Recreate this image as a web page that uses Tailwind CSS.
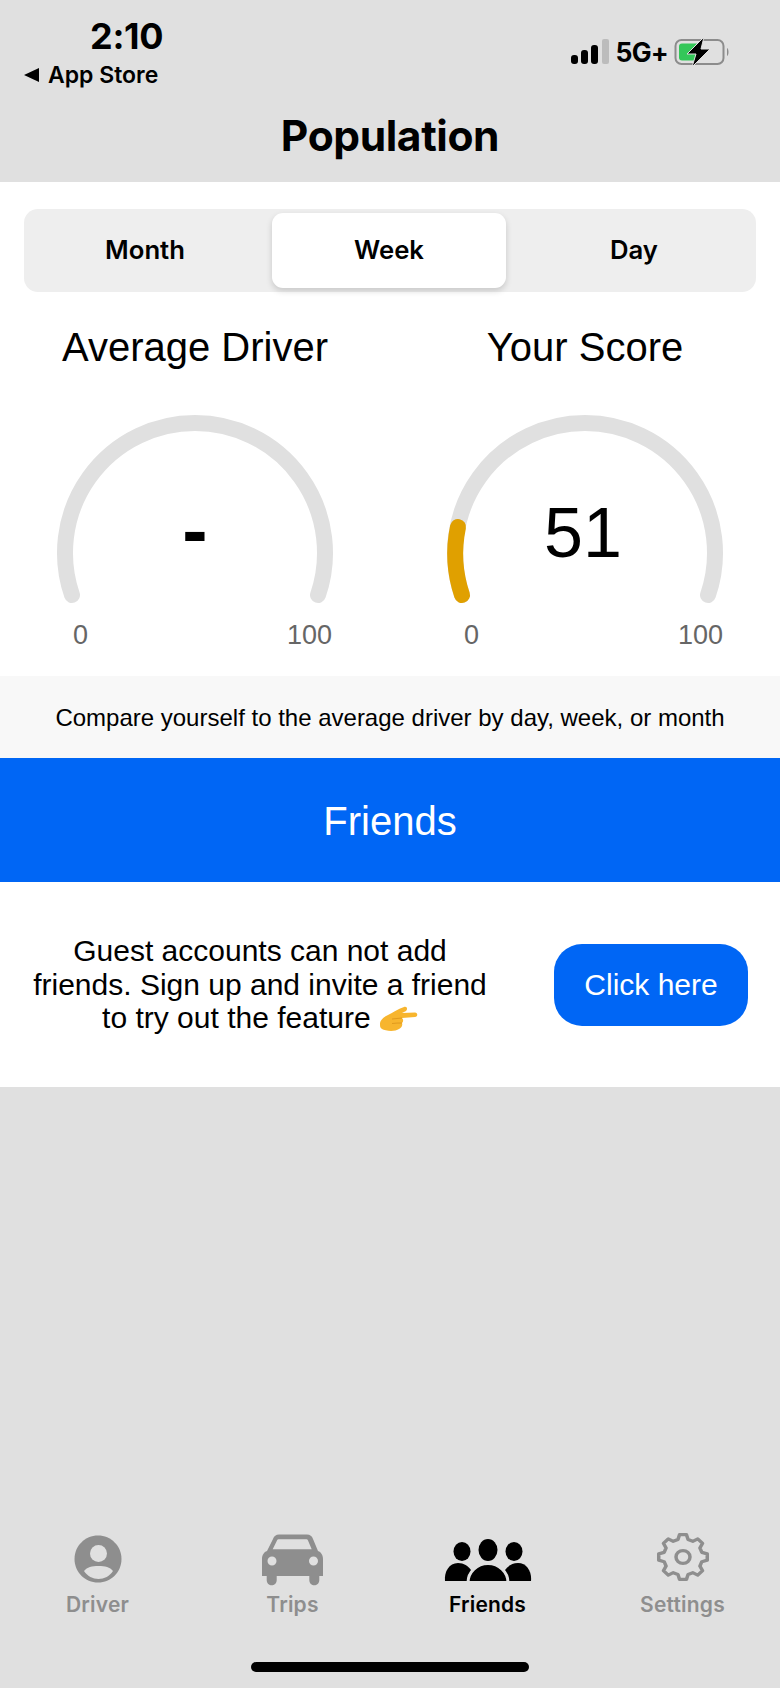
<!DOCTYPE html>
<html lang="en">

<head>
  <meta charset="UTF-8">
  <meta name="viewport" content="width=device-width, initial-scale=1.0">
  <title>Population</title>
  <script src="https://cdn.jsdelivr.net/npm/@tailwindcss/browser@4"></script>
</head>

<body class="w-[780px] h-[1688px] overflow-hidden bg-[#e0e0e0] text-black font-['Liberation_Sans',Arial,sans-serif]">

  <!-- Header -->
  <header class="h-[182px] bg-[#e0e0e0] font-['Inter',sans-serif]">
    <div class="flex justify-between h-[112px]">
      <div class="pl-[24px]">
        <p class="ml-[66px] pt-[16px] text-[36px] leading-[40px] font-bold tracking-[-0.3px]">2:10</p>
        <p class="flex items-center mt-[6px] text-[23px] leading-[26px] font-semibold">
          <svg class="w-[16px] h-[14px] mr-[8px]" viewBox="0 0 16 14"><path d="M15 0V14L0 7Z" fill="#000" /></svg>
          App Store
        </p>
      </div>
      <div class="flex items-start pt-[38px] pr-[50px]">
        <svg class="w-[40px] h-[26px] -ml-[2px]" viewBox="0 0 40 26">
          <rect x="1" y="17" width="7" height="9" rx="3" fill="#000" />
          <rect x="11" y="12" width="7" height="14" rx="3" fill="#000" />
          <rect x="21" y="7" width="7" height="19" rx="3" fill="#000" />
          <rect x="32" y="1" width="7" height="25" rx="2" fill="#bcbcbc" />
        </svg>
        <span class="ml-[6px] text-[26.500px] leading-[28px] font-bold tracking-[-0.8px]">5G+</span>
        <svg class="w-[56px] h-[30px] ml-[6px] -mt-[1px]" viewBox="0 0 56 30">
          <rect x="1.500" y="3" width="48" height="24" rx="6" fill="none" stroke="#8c8c8c" stroke-width="2" />
          <rect x="5" y="6.500" width="20" height="17" rx="3" fill="#34c759" />
          <path d="M53 11C55 12 55 18 53 19Z" fill="#8c8c8c" />
          <path d="M30 0L13 17H22L18 30L36 12H27Z" fill="#000" stroke="#e0e0e0" stroke-width="1" />
        </svg>
      </div>
    </div>
    <h1 class="text-center text-[42.500px] leading-[48px] font-bold tracking-[-0.4px]">Population</h1>
  </header>

  <main class="bg-white">
    <!-- Range switcher -->
    <div class="pt-[27px] px-[24px]">
      <div class="grid grid-cols-[248px_234px_250px] items-center h-[83px] bg-[#eeeeee] rounded-[14px] font-['Inter',sans-serif] text-[25.700px] font-semibold">
        <span class="text-center pr-[6px]">Month</span>
        <span class="flex items-center justify-center h-[75px] bg-white rounded-[11px] shadow-[0_3px_6px_rgba(0,0,0,0.16)]">Week</span>
        <span class="text-center pl-[6px]">Day</span>
      </div>
    </div>

    <!-- Gauges -->
    <div class="grid grid-cols-2 h-[384px]">
      <section>
        <h2 class="pt-[33px] text-center text-[40px] leading-[44px]">Average Driver</h2>
        <div class="relative w-[300px] h-[200px] mx-auto mt-[38px]">
          <svg class="w-[300px] h-[200px]" viewBox="0 0 300 200">
            <path d="M27 188A130 130 0 1 1 273 188" fill="none" stroke="#e0e0e0" stroke-width="16" stroke-linecap="round" />
          </svg>
          <span class="absolute left-0 right-0 top-[83px] text-center text-[76px] leading-[80px] font-bold">-</span>
        </div>
        <div class="flex justify-between pl-[73px] pr-[58px] mt-[13px] text-[27px] leading-[30px] text-[#666666]">
          <span>0</span><span>100</span>
        </div>
      </section>
      <section>
        <h2 class="pt-[33px] text-center text-[40px] leading-[44px]">Your Score</h2>
        <div class="relative w-[300px] h-[200px] mx-auto mt-[38px]">
          <svg class="w-[300px] h-[200px]" viewBox="0 0 300 200">
            <path d="M27 188A130 130 0 1 1 273 188" fill="none" stroke="#e0e0e0" stroke-width="16" stroke-linecap="round" />
            <path d="M27 188A130 130 0 0 1 23 120" fill="none" stroke="#e0a000" stroke-width="16" stroke-linecap="round" />
          </svg>
          <span class="absolute left-0 right-[4px] top-[86px] text-center text-[70px] leading-[80px]">51</span>
        </div>
        <div class="flex justify-between pl-[74px] pr-[57px] mt-[13px] text-[27px] leading-[30px] text-[#666666]">
          <span>0</span><span>100</span>
        </div>
      </section>
    </div>

    <p class="flex items-center justify-center h-[82px] pt-[1px] bg-[#f8f8f8] text-[24px]">Compare yourself to the average driver by day, week, or month</p>

    <h2 class="flex items-center justify-center h-[124px] pt-[1px] bg-[#0066f5] text-white text-[40px]">Friends</h2>

    <!-- Guest notice -->
    <div class="flex items-center h-[205px] pl-[28px] pr-[32px] justify-between">
      <p class="w-[464px] text-center text-[30px] leading-[33.500px]">
        Guest accounts can not add friends. Sign up and invite a friend to try out the feature
        <svg class="inline-block w-[38px] h-[25px] align-[-3px] ml-[1px]" viewBox="0 0 38 25">
          <path d="M0 18C0 14 4 11 8 9C12 7 18 3 24 1C27 0 28 3 26 5L22 7L35 6.500C38 6.500 38 11 35 11L22 12C24 14 23 16 22 17C23 20 21 22 19 23C15 26 5 25 2 23C0 22 0 20 0 18Z" fill="#f7b52e" />
          <path d="M12 13C15 12.500 19 12.500 22 12M12 17.500C15 17 19 17 22 17" fill="none" stroke="#e09a1e" stroke-width="1" />
        </svg>
      </p>
      <button class="w-[194px] h-[82px] bg-[#0066f5] rounded-[28px] text-white text-[30px]">Click here</button>
    </div>
  </main>

  <!-- Tab bar -->
  <nav class="grid grid-cols-4 pt-[443px] font-['Inter',sans-serif] text-[21px] leading-[26px] font-semibold tracking-[0.2px] text-[#8e8e8e]">
    <a class="flex flex-col items-center">
      <span class="flex items-center h-[62px] pb-[4px]">
        <svg class="w-[48px] h-[48px]" viewBox="0 0 48 48">
          <path d="M24 .5C37 .5 47.500 11 47.500 24C47.500 37 37 47.500 24 47.500C11 47.500 .5 37 .5 24C.5 11 11 .5 24 .5Z" fill="#8e8e8e" />
          <ellipse cx="24.500" cy="18.500" rx="8.500" ry="8.500" fill="#e0e0e0" />
          <path d="M10 36C13 32 18 31 24.500 31C31 31 36 32 39 36C36 41 30 44 24.500 44C19 44 13 41 10 36Z" fill="#e0e0e0" />
        </svg>
      </span>
      Driver
    </a>
    <a class="flex flex-col items-center">
      <span class="flex items-center h-[62px] pb-[3px]">
        <svg class="w-[62px] h-[52px]" viewBox="0 0 62 52">
          <path fill-rule="evenodd" d="M17 .5H45C48 .5 50 2 51 5L56 17C59 18 61 21 61 25V42H57.300V46C57.300 53 47.300 53 47.300 46V42H14.700V46C14.700 53 4.700 53 4.700 46V42H0V25C0 21 2 18 5 17L11 5C12 2 14 .5 17 .5ZM17 5.300C16 5.300 15.500 5.500 15 6.500L10.700 15.300H49.700L46 6.500C45.500 5.500 45 5.300 44 5.300ZM10 22.500A4.500 4.500 0 1 0 10 31.500A4.500 4.500 0 1 0 10 22.500ZM51.500 22.500A4.500 4.500 0 1 0 51.500 31.500A4.500 4.500 0 1 0 51.500 22.500Z" fill="#8e8e8e" />
        </svg>
      </span>
      Trips
    </a>
    <a class="flex flex-col items-center text-black">
      <span class="flex items-center h-[62px]">
        <svg class="w-[90px] h-[44px]" viewBox="0 0 90 44">
          <ellipse cx="45" cy="11" rx="9.500" ry="11" fill="#000" />
          <ellipse cx="19" cy="12.500" rx="8.500" ry="9.500" fill="#000" />
          <ellipse cx="71" cy="12.500" rx="8.500" ry="9.500" fill="#000" />
          <path d="M2 42C1 33 6 24 15 24C21 24 25 27 28 31V42Z" fill="#000" />
          <path d="M88 42C89 33 84 24 75 24C69 24 65 27 62 31V42Z" fill="#000" />
          <path d="M25 43.500C25 33 34 24.500 45 24.500C56 24.500 65 33 65 43.500Z" fill="#000" stroke="#e0e0e0" stroke-width="3" />
          <rect x="0" y="42" width="90" height="3" fill="#e0e0e0" />
        </svg>
      </span>
      Friends
    </a>
    <a class="flex flex-col items-center">
      <span class="flex items-center h-[62px] pb-[9px]">
        <svg class="w-[54px] h-[50px]" viewBox="0 0 54 54" preserveAspectRatio="none">
          <path d="M21.950 8.160L23.590 2.740H30.410L32.050 8.160L36.750 10.110L41.750 7.430L46.570 12.250L43.890 17.250L45.840 21.950L51.260 23.590V30.410L45.840 32.050L43.890 36.750L46.570 41.750L41.750 46.570L36.750 43.890L32.050 45.840L30.410 51.260H23.590L21.950 45.840L17.250 43.890L12.250 46.570L7.430 41.750L10.110 36.750L8.160 32.050L2.740 30.410V23.590L8.160 21.950L10.110 17.250L7.430 12.250L12.250 7.430L17.250 10.110Z" fill="none" stroke="#8e8e8e" stroke-width="3.500" stroke-linejoin="round" />
          <circle cx="27" cy="27" r="7" fill="none" stroke="#8e8e8e" stroke-width="3.500" />
        </svg>
      </span>
      Settings
    </a>
  </nav>

  <div class="w-[278px] h-[10px] mx-auto mt-[44px] bg-black rounded-full"></div>
</body>

</html>
